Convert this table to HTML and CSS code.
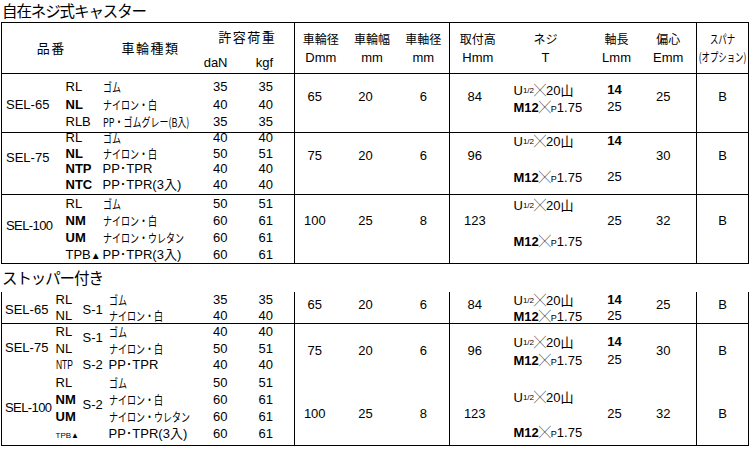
FILE: index.html
```html
<!DOCTYPE html>
<html lang="ja">
<head>
<meta charset="utf-8">
<title>自在ネジ式キャスター</title>
<link rel="stylesheet" href="styles.css">
</head>
<body>
<div class="page">
<h1 class="cap">自在ネジ式キャスター</h1>
<table class="spec t1">
<colgroup>
<col class="c1-model"><col class="c1-code"><col class="c1-type"><col class="c-dan"><col class="c-kgf">
<col class="c-d"><col class="c-w"><col class="c-a">
<col class="c-h"><col class="c-t"><col class="c-l"><col class="c-e">
<col class="c-s">
</colgroup>
<thead>
<tr class="ha">
<th colspan="2" rowspan="2" class="hl">品番</th>
<th rowspan="2" class="hl">車輪種類</th>
<th colspan="2" class="hl hload sr">許容荷重</th>
<th rowspan="2" class="hr">車輪径<br><span class="u">Dmm</span></th>
<th rowspan="2" class="hr">車輪幅<br><span class="u">mm</span></th>
<th rowspan="2" class="hr sr">車軸径<br><span class="u">mm</span></th>
<th rowspan="2" class="hr">取付高<br><span class="u">Hmm</span></th>
<th rowspan="2" class="hr hscr">ネジ<br><span class="u">T</span></th>
<th rowspan="2" class="hr">軸長<br><span class="u">Lmm</span></th>
<th rowspan="2" class="hr sr">偏心<br><span class="u">Emm</span></th>
<th rowspan="2" class="hr"><span class="sq">スパナ</span><span class="sq">(オプション)</span></th>
</tr>
<tr class="hb"><th class="unit dan">daN</th><th class="unit kgf sr">kgf</th></tr>
</thead>
<tbody class="b b1">
<tr>
<td class="model">SEL-65</td>
<td class="ln code"><div>RL</div><div class="bd">NL</div><div>RLB</div></td>
<td class="ln type"><div><span class="k">ゴム</span></div><div><span class="k">ナイロン・白</span></div><div><span class="k">PP・ゴムグレー(B入)</span></div></td>
<td class="ln dan"><div>35</div><div>40</div><div>35</div></td>
<td class="ln kgf sr"><div>35</div><div>40</div><div>35</div></td>
<td class="v d">65</td><td class="v w">20</td><td class="v a sr">6</td><td class="v h">84</td>
<td class="two scr"><div>U<span class="fr">1/2</span><span class="x">╳</span>20山</div><div><b>M12</b><span class="x">╳</span><span class="p">P</span>1.75</div></td>
<td class="two lg"><div><b>14</b></div><div>25</div></td>
<td class="v e sr">25</td><td class="v s">B</td>
</tr>
</tbody>
<tbody class="b b2">
<tr>
<td class="model">SEL-75</td>
<td class="ln code"><div>RL</div><div class="bd">NL</div><div class="bd">NTP</div><div class="bd">NTC</div></td>
<td class="ln type"><div><span class="k">ゴム</span></div><div><span class="k">ナイロン・白</span></div><div>PP･TPR</div><div>PP･TPR(3入)</div></td>
<td class="ln dan"><div>40</div><div>50</div><div>40</div><div>40</div></td>
<td class="ln kgf sr"><div>40</div><div>51</div><div>40</div><div>40</div></td>
<td class="v d">75</td><td class="v w">20</td><td class="v a sr">6</td><td class="v h">96</td>
<td class="two scr"><div>U<span class="fr">1/2</span><span class="x">╳</span>20山</div><div><b>M12</b><span class="x">╳</span><span class="p">P</span>1.75</div></td>
<td class="two lg"><div><b>14</b></div><div>25</div></td>
<td class="v e sr">30</td><td class="v s">B</td>
</tr>
</tbody>
<tbody class="b b3">
<tr>
<td class="model narrow">SEL-100</td>
<td class="ln code"><div>RL</div><div class="bd">NM</div><div class="bd">UM</div><div>TPB<span class="tri">▲</span></div></td>
<td class="ln type"><div><span class="k">ゴム</span></div><div><span class="k">ナイロン・白</span></div><div><span class="k">ナイロン・ウレタン</span></div><div>PP･TPR(3入)</div></td>
<td class="ln dan"><div>50</div><div>60</div><div>60</div><div>60</div></td>
<td class="ln kgf sr"><div>51</div><div>61</div><div>61</div><div>61</div></td>
<td class="v d">100</td><td class="v w">25</td><td class="v a sr">8</td><td class="v h">123</td>
<td class="two scr"><div>U<span class="fr">1/2</span><span class="x">╳</span>20山</div><div><b>M12</b><span class="x">╳</span><span class="p">P</span>1.75</div></td>
<td class="v lg">25</td>
<td class="v e sr">32</td><td class="v s">B</td>
</tr>
</tbody>
</table>

<h2 class="sub">ストッパー付き</h2>
<table class="spec t2">
<colgroup>
<col class="c2-model"><col class="c2-code"><col class="c2-stop"><col class="c2-type"><col class="c-dan"><col class="c-kgf">
<col class="c-d"><col class="c-w"><col class="c-a">
<col class="c-h"><col class="c-t"><col class="c-l"><col class="c-e">
<col class="c-s">
</colgroup>
<tbody class="b c1">
<tr>
<td class="model">SEL-65</td>
<td class="ln code"><div>RL</div><div>NL</div></td>
<td class="stop"><div>S-1</div></td>
<td class="ln type"><div><span class="k">ゴム</span></div><div><span class="k">ナイロン・白</span></div></td>
<td class="ln dan"><div>35</div><div>40</div></td>
<td class="ln kgf sr"><div>35</div><div>40</div></td>
<td class="v d">65</td><td class="v w">20</td><td class="v a sr">6</td><td class="v h">84</td>
<td class="two scr"><div>U<span class="fr">1/2</span><span class="x">╳</span>20山</div><div><b>M12</b><span class="x">╳</span><span class="p">P</span>1.75</div></td>
<td class="two lg"><div><b>14</b></div><div>25</div></td>
<td class="v e sr">25</td><td class="v s">B</td>
</tr>
</tbody>
<tbody class="b c2">
<tr>
<td class="model">SEL-75</td>
<td class="ln code"><div>RL</div><div>NL</div><div><span class="nar">NTP</span></div></td>
<td class="stop"><div>S-1</div><div>S-2</div></td>
<td class="ln type"><div><span class="k">ゴム</span></div><div><span class="k">ナイロン・白</span></div><div>PP･TPR</div></td>
<td class="ln dan"><div>40</div><div>50</div><div>40</div></td>
<td class="ln kgf sr"><div>40</div><div>51</div><div>40</div></td>
<td class="v d">75</td><td class="v w">20</td><td class="v a sr">6</td><td class="v h">96</td>
<td class="two scr"><div>U<span class="fr">1/2</span><span class="x">╳</span>20山</div><div><b>M12</b><span class="x">╳</span><span class="p">P</span>1.75</div></td>
<td class="two lg"><div><b>14</b></div><div>25</div></td>
<td class="v e sr">30</td><td class="v s">B</td>
</tr>
</tbody>
<tbody class="b c3">
<tr>
<td class="model narrow">SEL-100</td>
<td class="ln code"><div>RL</div><div class="bd">NM</div><div class="bd">UM</div><div><span class="tiny">TPB▲</span></div></td>
<td class="stop"><div>S-2</div></td>
<td class="ln type"><div><span class="k">ゴム</span></div><div><span class="k">ナイロン・白</span></div><div><span class="k">ナイロン・ウレタン</span></div><div>PP･TPR(3入)</div></td>
<td class="ln dan"><div>50</div><div>60</div><div>60</div><div>60</div></td>
<td class="ln kgf sr"><div>51</div><div>61</div><div>61</div><div>61</div></td>
<td class="v d">100</td><td class="v w">25</td><td class="v a sr">8</td><td class="v h">123</td>
<td class="two scr"><div>U<span class="fr">1/2</span><span class="x">╳</span>20山</div><div><b>M12</b><span class="x">╳</span><span class="p">P</span>1.75</div></td>
<td class="v lg">25</td>
<td class="v e sr">32</td><td class="v s">B</td>
</tr>
</tbody>
</table>
</div>
</body>
</html>
```

FILE: styles.css
```css
* { box-sizing: border-box; }
html, body { margin: 0; padding: 0; background: #fff; }
body {
  font-family: "Liberation Sans", "Noto Sans CJK JP", sans-serif;
  font-size: 13px;
  color: #000;
}
.page { width: 750px; padding-left: 1px; }

.cap, .sub {
  margin: 0;
  font-family: "Noto Sans CJK JP", sans-serif;
  font-weight: 400;
  font-size: 15.5px;
  letter-spacing: -1.1px;
  padding-left: 1px;
}
.cap { height: 22px; line-height: 20px; }
.sub { height: 28px; line-height: 27px; }

/* tables */
.spec {
  border-collapse: collapse;
  table-layout: fixed;
  width: 748px;
  border: 1px solid #000;
}
.t2 { border-top: none; }
.spec th, .spec td {
  padding: 0;
  font-weight: 400;
  vertical-align: top;
  white-space: nowrap;
  text-align: left;
}
.spec .sr { border-right: 1px solid #000; }
.t1 thead { border-bottom: 1px solid #000; }
.t1 tbody.b2, .t1 tbody.b3, .t2 tbody.c2 { border-top: 1px solid #000; }

/* column widths */
.c1-model { width: 57px; }
.c1-code { width: 42px; }
.c1-type { width: 100px; }
.c2-model { width: 52px; }
.c2-code { width: 25px; }
.c2-stop { width: 27px; }
.c2-type { width: 95px; }
.c-dan { width: 40px; }
.c-kgf { width: 54px; }
.c-d { width: 52px; }
.c-w { width: 51px; }
.c-a { width: 52px; }
.c-h { width: 56px; }
.c-t { width: 87px; }
.c-l { width: 48px; }
.c-e { width: 56px; }
.c-s { width: 52px; }

/* header */
.ha { height: 30px; }
.hb { height: 21px; }
.spec th.hl {
  text-align: center;
  vertical-align: middle;
  font-family: "Noto Sans CJK JP", sans-serif;
  font-size: 13px;
  letter-spacing: 1.5px;
  line-height: 16px;
}
.spec th.hload { vertical-align: top; padding-top: 6px; }
.spec th.unit { vertical-align: bottom; text-align: right; line-height: 16px; padding-bottom: 2px; }
.spec th.unit.dan { padding-right: 10px; }
.spec th.unit.kgf { padding-right: 21px; }
.spec th.hr {
  text-align: center;
  vertical-align: middle;
  font-family: "Noto Sans CJK JP", sans-serif;
  font-size: 12px;
  line-height: 18px;
}
.spec th.hscr { padding-right: 7px; }
.hr .u { font-family: "Liberation Sans", sans-serif; font-size: 13px; }
.sq {
  display: block;
  margin: 0 -20px;
  text-align: center;
  font-size: 12px;
  transform: scaleX(.7);
}

/* body rows */
.b1 tr { height: 59px; }
.b2 tr { height: 62px; }
.b3 tr { height: 69px; }
.c1 tr { height: 31px; }
.c2 tr { height: 50px; }
.c3 tr { height: 72px; }

.ln div, .stop div, .two div { height: 16px; line-height: 16px; }
.b1 .ln div { height: 17.5px; line-height: 17.5px; }
.b1 .ln { padding-top: 4px; }
.b2 .ln div { height: 15.5px; line-height: 15.5px; }
.b2 .ln div:first-child { margin-top: -3px; }
.b3 .ln div { height: 17px; line-height: 17px; }
.c1 .ln div { height: 15.5px; line-height: 15.5px; }
.c2 .ln div { height: 16.5px; line-height: 16.5px; }
.c3 .ln div { height: 17.25px; line-height: 17.25px; }

.model { padding-left: 4px !important; line-height: 16px; }
.narrow { letter-spacing: -0.6px; }
.b1 .model { padding-top: 23px !important; }
.b2 .model { padding-top: 17px !important; }
.b3 .model { padding-top: 23px !important; }
.c1 .model { padding-top: 10px !important; }
.c2 .model { padding-top: 16px !important; }
.c3 .model { padding-top: 26px !important; }
.t2 .model { padding-left: 3px !important; }

.t1 .code { padding-left: 7px !important; }
.t2 .code { padding-left: 2px !important; }
.t1 .type { padding-left: 2px !important; }
.t2 .type { padding-left: 3px !important; }
.stop { padding-left: 4px !important; }
.c1 .stop { padding-top: 10px !important; }
.c2 .stop { padding-top: 6px !important; }
.c2 .stop div + div { margin-top: 11px; }
.c3 .stop { padding-top: 23px !important; }

.bd { font-weight: 700; }
.nar { display: inline-block; transform: scaleX(.65); transform-origin: 0 50%; }
.tiny { font-size: 8px; }
.tri { font-size: 10px; }

.dan { text-align: right !important; padding-right: 13px !important; }
.kgf { text-align: right !important; padding-right: 21px !important; }

.k {
  display: inline-block;
  font-family: "Noto Sans CJK JP", sans-serif;
  font-size: 12px;
  transform: scaleX(.75);
  transform-origin: 0 50%;
}

/* right side values */
.v { text-align: center !important; line-height: 16px; }
.v.d { padding-right: 12px !important; }
.v.w { padding-right: 13px !important; }
.v.h { padding-right: 6px !important; }
.v.lg { padding-right: 4px !important; }
.v.e { padding-right: 10px !important; }
.two.lg { text-align: center !important; padding-right: 4px !important; }
.scr { padding-left: 8px !important; }

.b1 .v { padding-top: 15px !important; }
.b2 .v { padding-top: 15px !important; }
.b3 .v { padding-top: 18px !important; }
.c1 .v { padding-top: 5px !important; }
.c2 .v { padding-top: 19px !important; }
.c3 .v { padding-top: 32px !important; }

.b1 .two { padding-top: 7px !important; }
.b1 .two div { height: 17px; line-height: 17px; }
.b2 .two { padding-top: 0; }
.b2 .two div + div { margin-top: 20px; }
.b3 .two { padding-top: 2px !important; }
.b3 .two div + div { margin-top: 20px; }
.c1 .two { padding-top: 0; }
.c1 .two div { height: 15.5px; line-height: 15.5px; }
.c2 .two { padding-top: 10px !important; }
.c2 .two div + div { margin-top: 2px; }
.c3 .two { padding-top: 15px !important; }
.c3 .two div + div { margin-top: 19px; }

.fr { font-size: 8px; vertical-align: 2px; }
.x { font-family: "Noto Sans CJK JP", sans-serif; font-size: 12px; font-weight: 400; }
.p { font-size: 9px; }
```
